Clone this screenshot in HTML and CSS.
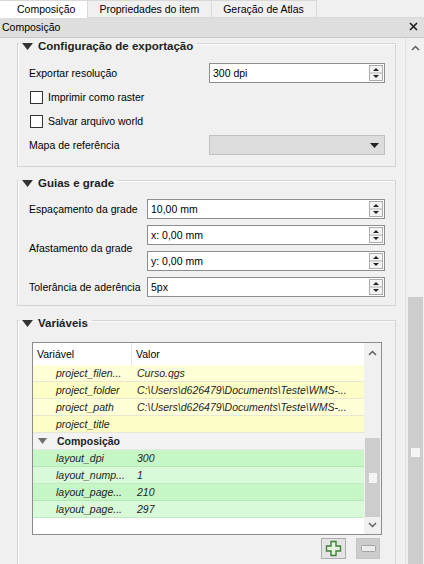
FILE: index.html
```html
<!DOCTYPE html>
<html lang="pt">
<head>
<meta charset="utf-8">
<title>Composição</title>
<link rel="stylesheet" href="styles.css">
</head>
<body>
<div class="tabbar">
  <div class="tab active">Composição</div>
  <div class="tab">Propriedades do item</div>
  <div class="tab">Geração de Atlas</div>
</div>
<div class="dock-title">
  <span>Composição</span>
  <svg class="close" width="9" height="9" viewBox="0 0 9 9"><path d="M1 1L8 8M8 1L1 8" stroke="#1a1a1a" stroke-width="1.6"/></svg>
</div>
<div class="scrollarea">
  <div class="viewport">
    <div class="content">
      <fieldset class="group g1">
        <legend><svg class="tri" width="11" height="7" viewBox="0 0 11 7"><path d="M0 0H11L5.5 7Z" fill="#333"/></svg>Configuração de exportação</legend>
        <div class="form form1">
          <div class="lbl">Exportar resolução</div>
          <div class="field spin"><span>300 dpi</span><svg class="spinbtn" width="14" height="16" viewBox="0 0 14 16"><rect x="0.5" y="0.5" width="13" height="15" fill="#f3f3f3" stroke="#adadad"/><path d="M1 8H13" stroke="#adadad"/><path d="M4 6H10L7 3Z" fill="#222"/><path d="M4 10H10L7 13Z" fill="#222"/></svg></div>
          <div class="check wide"><span class="box"></span>Imprimir como raster</div>
          <div class="check wide"><span class="box"></span>Salvar arquivo world</div>
          <div class="lbl">Mapa de referência</div>
          <div class="field combo"><span></span><svg width="9" height="5" viewBox="0 0 9 5"><path d="M0 0H9L4.5 5Z" fill="#222"/></svg></div>
        </div>
      </fieldset>

      <fieldset class="group g2">
        <legend><svg class="tri" width="11" height="7" viewBox="0 0 11 7"><path d="M0 0H11L5.5 7Z" fill="#333"/></svg>Guias e grade</legend>
        <div class="form form2">
          <div class="lbl">Espaçamento da grade</div>
          <div class="field spin"><span>10,00 mm</span><svg class="spinbtn" width="14" height="16" viewBox="0 0 14 16"><rect x="0.5" y="0.5" width="13" height="15" fill="#f3f3f3" stroke="#adadad"/><path d="M1 8H13" stroke="#adadad"/><path d="M4 6H10L7 3Z" fill="#222"/><path d="M4 10H10L7 13Z" fill="#222"/></svg></div>
          <div class="lbl tall">Afastamento da grade</div>
          <div class="field spin"><span>x: 0,00 mm</span><svg class="spinbtn" width="14" height="16" viewBox="0 0 14 16"><rect x="0.5" y="0.5" width="13" height="15" fill="#f3f3f3" stroke="#adadad"/><path d="M1 8H13" stroke="#adadad"/><path d="M4 6H10L7 3Z" fill="#222"/><path d="M4 10H10L7 13Z" fill="#222"/></svg></div>
          <div class="field spin"><span>y: 0,00 mm</span><svg class="spinbtn" width="14" height="16" viewBox="0 0 14 16"><rect x="0.5" y="0.5" width="13" height="15" fill="#f3f3f3" stroke="#adadad"/><path d="M1 8H13" stroke="#adadad"/><path d="M4 6H10L7 3Z" fill="#222"/><path d="M4 10H10L7 13Z" fill="#222"/></svg></div>
          <div class="lbl">Tolerância de aderência</div>
          <div class="field spin"><span>5px</span><svg class="spinbtn" width="14" height="16" viewBox="0 0 14 16"><rect x="0.5" y="0.5" width="13" height="15" fill="#f3f3f3" stroke="#adadad"/><path d="M1 8H13" stroke="#adadad"/><path d="M4 6H10L7 3Z" fill="#222"/><path d="M4 10H10L7 13Z" fill="#222"/></svg></div>
        </div>
      </fieldset>

      <fieldset class="group g3">
        <legend><svg class="tri" width="11" height="7" viewBox="0 0 11 7"><path d="M0 0H11L5.5 7Z" fill="#333"/></svg>Variáveis</legend>
        <div class="table">
          <div class="tmain">
            <div class="thead">
              <div class="c1">Variável</div>
              <div class="c2">Valor</div>
            </div>
            <div class="row y1"><div class="c1">project_filen...</div><div class="c2">Curso.qgs</div></div>
            <div class="row y2"><div class="c1">project_folder</div><div class="c2">C:\Users\d626479\Documents\Teste\WMS-...</div></div>
            <div class="row y1"><div class="c1">project_path</div><div class="c2">C:\Users\d626479\Documents\Teste\WMS-...</div></div>
            <div class="row y2"><div class="c1">project_title</div><div class="c2"></div></div>
            <div class="row grp"><div class="c1"><svg class="gtri" width="9" height="6" viewBox="0 0 9 6"><path d="M0 0H9L4.5 6Z" fill="#6f6f6f"/></svg>Composição</div></div>
            <div class="row g1r"><div class="c1">layout_dpi</div><div class="c2">300</div></div>
            <div class="row g2r"><div class="c1">layout_nump...</div><div class="c2">1</div></div>
            <div class="row g1r"><div class="c1">layout_page...</div><div class="c2">210</div></div>
            <div class="row g2r"><div class="c1">layout_page...</div><div class="c2">297</div></div>
          </div>
          <div class="tscroll">
            <svg class="chev" width="9" height="6" viewBox="0 0 9 6"><path d="M1 5L4.5 1.5L8 5" fill="none" stroke="#606060" stroke-width="1.5"/></svg>
            <div class="ttrack"><div class="tthumb"><span class="grip"></span></div></div>
            <svg class="chev" width="9" height="6" viewBox="0 0 9 6"><path d="M1 1L4.5 4.5L8 1" fill="none" stroke="#606060" stroke-width="1.5"/></svg>
          </div>
        </div>
        <div class="tbtns">
          <div class="btn add"><svg width="17" height="17" viewBox="0 0 17 17"><path d="M6 1.5H11V6H15.5V11H11V15.5H6V11H1.5V6H6Z" fill="#e3f3dc" stroke="#3f7f3a" stroke-width="1.4"/></svg></div>
          <div class="btn del"><svg width="15" height="7" viewBox="0 0 15 7"><rect x="0.5" y="0.5" width="14" height="6" rx="1" fill="#ececec" stroke="#a3a3a3"/></svg></div>
        </div>
      </fieldset>
    </div>
  </div>
  <div class="vscroll">
    <svg class="chev up" width="9" height="6" viewBox="0 0 9 6"><path d="M1 5L4.5 1.5L8 5" fill="none" stroke="#606060" stroke-width="1.5"/></svg>
    <div class="vtrack"><div class="vthumb"><span class="grip"></span></div></div>
  </div>
</div>
</body>
</html>
```

FILE: styles.css
```css
* { box-sizing: border-box; }
html, body { margin: 0; padding: 0; }
body {
  width: 424px;
  height: 564px;
  overflow: hidden;
  background: #f0f0f0;
  font-family: "Liberation Sans", Arial, sans-serif;
  font-size: 10.5px;
  color: #000;
  display: flex;
  flex-direction: column;
}

/* tabs */
.tabbar {
  display: flex;
  height: 18px;
  border-bottom: 1px solid #d9d9d9;
  background: #f0f0f0;
}
.tab {
  height: 17px;
  line-height: 16px;
  padding: 0 12px 0 11px;
  border: 1px solid #d9d9d9;
  border-bottom: none;
  border-left: none;
  background: #f0f0f0;
}
.tab.active {
  background: #fff;
  padding: 0 12px 0 17px;
  height: 18px;
}

/* dock title */
.dock-title {
  height: 19px;
  background: #dedede;
  display: flex;
  align-items: center;
  justify-content: space-between;
  padding: 0 6px 2px 2px;
}

/* scroll area */
.scrollarea {
  flex: 1;
  display: flex;
  border-top: 1px solid #c8c8c8;
  min-height: 0;
}
.viewport {
  flex: 1;
  overflow: hidden;
  border-right: 1px solid #e2e2e2;
  padding-right: 4px;
}
.content {
  margin-top: -5px;
  padding: 0 5px 0 17px;
}

.vscroll {
  width: 18px;
  display: flex;
  flex-direction: column;
  align-items: center;
  background: #f0f0f0;
  padding-left: 1px;
}
.vscroll .up { margin-top: 7px; }
.vtrack {
  flex: 1;
  width: 100%;
  display: flex;
  flex-direction: column;
  justify-content: flex-end;
}
.vthumb {
  height: 267px;
  margin: 0 1px 0 1px;
  background: #cdcdcd;
  display: flex;
  flex-direction: column;
  align-items: center;
  justify-content: flex-end;
  padding-bottom: 107px;
}
.grip {
  width: 9px;
  height: 9px;
  background: #f4f4f4;
}

/* group boxes */
.group {
  margin: 0;
  min-width: 0;
  border: 1px solid #d4d4d4;
  box-shadow: inset 1px 1px 0 #fbfbfb;
}
.group legend {
  padding: 6px 4px 0 3px;
  margin-left: -10px;
  font-weight: bold;
  font-size: 11.5px;
  line-height: 14px;
  color: #222;
  display: flex;
  align-items: center;
}
.tri { margin-right: 5px; }

.g1 { padding: 10px 10px 11px 11px; }
.g2 { margin-top: 3px; padding: 9px 10px 8px 11px; }
.g3 { margin-top: 4px; padding: 12px 13px 40px 14px; }
.g3 legend { margin-left: -13px; }

.form {
  display: grid;
  align-items: center;
}
.form1 {
  grid-template-columns: 180px 1fr;
  grid-auto-rows: 20px;
  row-gap: 4px;
}
.form2 {
  grid-template-columns: 118px 1fr;
  grid-auto-rows: 20px;
  row-gap: 6px;
}
.wide { grid-column: 1 / 3; }
.tall { grid-row: span 2; }
.lbl { white-space: nowrap; }

.field {
  height: 20px;
  border: 1px solid #8e8e8e;
  background: #fff;
  display: flex;
  align-items: center;
  justify-content: space-between;
  padding: 0 1px 0 3px;
}
.spinbtn { display: block; }
.combo {
  background: #dcdcdc;
  border-color: #c0c0c0;
  padding: 0 5px 0 3px;
}

.check {
  display: flex;
  align-items: center;
  padding-left: 1px;
}
.box {
  width: 13px;
  height: 13px;
  border: 1px solid #333;
  background: #fff;
  margin-right: 5px;
}

/* table */
.table {
  height: 193px;
  border: 1px solid #8c8c8c;
  background: #fff;
  display: flex;
}
.tmain { flex: 1; }
.thead {
  display: flex;
  height: 22px;
  align-items: center;
}
.thead .c1 {
  width: 99px;
  padding-left: 4px;
  border-right: 1px solid #e5e5e5;
  height: 100%;
  display: flex;
  align-items: center;
}
.thead .c2 { padding-left: 4px; }
.row {
  display: flex;
  height: 17px;
  align-items: center;
  border-bottom: 1px solid #e8e8d2;
  font-style: italic;
  color: #1e1e1e;
  white-space: nowrap;
}
.row .c1 { width: 100px; padding-left: 23px; overflow: hidden; }
.row .c2 { padding-left: 4px; }
.y1 { background: #ffffd8; }
.y2 { background: #fdfdc6; }
.grp {
  background: #f3f3f3;
  font-style: normal;
  font-weight: bold;
  color: #222;
  border-bottom-color: #e6e6e6;
}
.grp .c1 {
  padding-left: 5px;
  display: flex;
  align-items: center;
  width: auto;
}
.gtri { margin-right: 10px; }
.g1r { background: #c6f6c6; border-bottom-color: #b6e6b6; }
.g2r { background: #d8fad8; border-bottom-color: #c2eac2; }

.tscroll {
  width: 17px;
  background: #f0f0f0;
  display: flex;
  flex-direction: column;
  align-items: center;
  padding: 7px 0 6px;
}
.ttrack {
  flex: 1;
  width: 100%;
  display: flex;
  flex-direction: column;
  justify-content: flex-end;
  padding: 0 1px 5px;
}
.tthumb {
  height: 79px;
  background: #cdcdcd;
  display: flex;
  justify-content: center;
  padding-top: 35px;
}
.tscroll .grip { width: 8px; height: 10px; }

.tbtns {
  display: flex;
  justify-content: flex-end;
  gap: 10px;
  margin-top: 3px;
  padding-right: 2px;
}
.btn {
  width: 25px;
  height: 21px;
  display: flex;
  align-items: center;
  justify-content: center;
}
.add { background: #e4e4e4; border: 1px solid #adadad; }
.del { background: #cccccc; border: 1px solid #c4c4c4; width: 24px; }
```
